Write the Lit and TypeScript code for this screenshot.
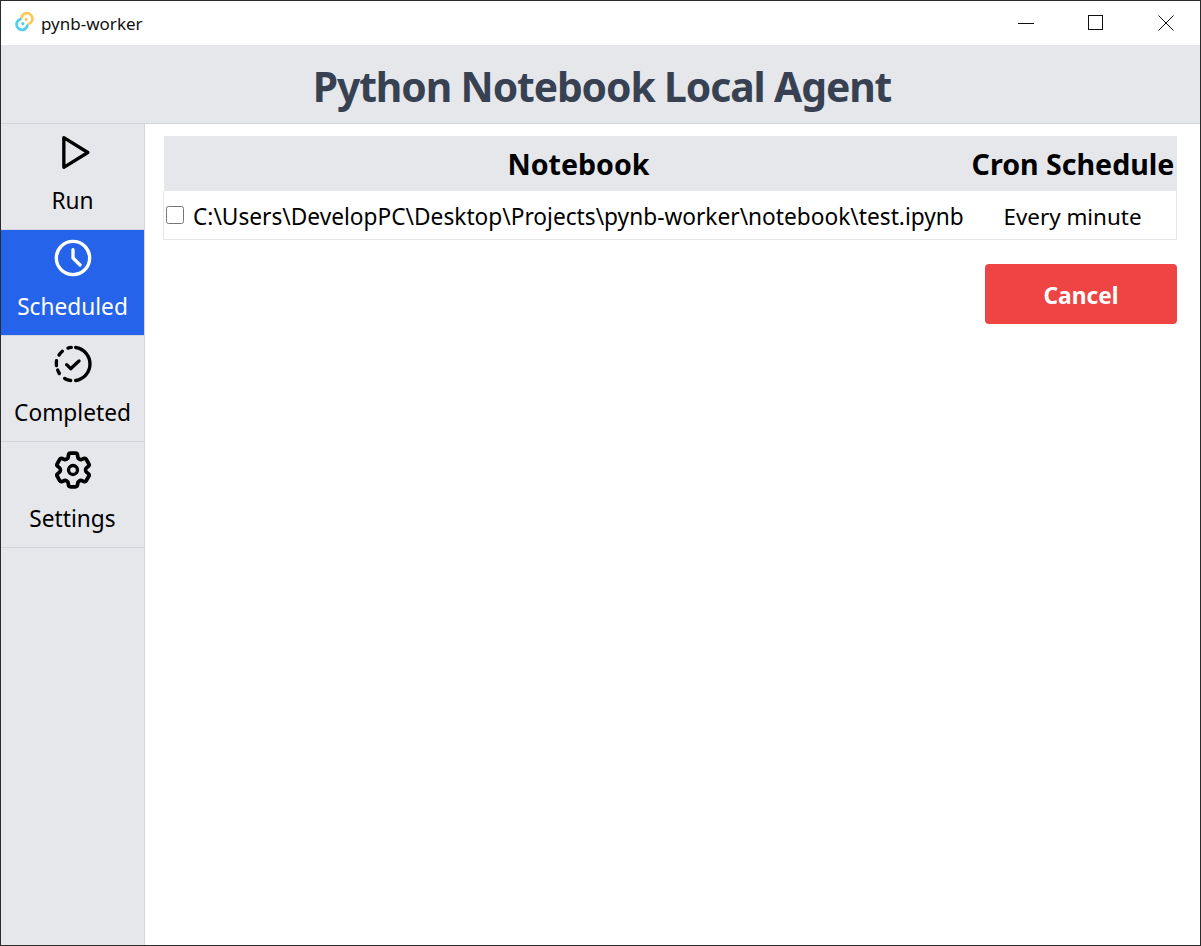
import {LitElement, css, html} from 'lit';
import {customElement} from 'lit/decorators.js';

@customElement('app-root')
export class AppRoot extends LitElement {
  static styles = css`
    :host {
      display: flex;
      flex-direction: column;
      width: 1201px;
      height: 946px;
      box-sizing: border-box;
      border: 1px solid #2b2b2b;
      font-family: 'Noto Sans', 'Open Sans', sans-serif;
      background: #fff;
      overflow: hidden;
      color: #000;
    }
    .titlebar {
      height: 44px;
      display: flex;
      align-items: center;
      flex: none;
      background: #fff;
    }
    .app-icon { margin: 0 0 3px 13px; width: 21px; height: 21px; }
    .app-name { margin-left: 6px; font-size: 17px; color: #111; }
    .win-btns { margin-left: auto; margin-right: -1px; display: flex; }
    .win-btn { width: 70px; height: 44px; display: flex; align-items: center; justify-content: center; }
    .header {
      height: 79px;
      flex: none;
      box-sizing: border-box;
      background: #e5e7eb;
      border-bottom: 1px solid #d1d5db;
      display: flex;
      align-items: center;
      justify-content: center;
      padding: 4px 0 0 3px;
      font-size: 40.8px;
      font-weight: 700;
      letter-spacing: -1.1px;
      color: #374151;
    }
    .body { flex: 1; display: flex; min-height: 0; }
    .side {
      width: 143px;
      flex: none;
      background: #e5e7eb;
      border-right: 1px solid #d1d5db;
    }
    .tab {
      height: 106px;
      box-sizing: border-box;
      border-bottom: 1px solid #d1d5db;
      display: flex;
      flex-direction: column;
      align-items: center;
      font-size: 22.7px;
    }
    .tab svg { margin-top: 8px; margin-bottom: 13px; }
    .tab.on { background: #2563eb; color: #fff; }
    .main { flex: 1; padding: 12px 23px 0 19px; }
    .cols { display: grid; grid-template-columns: 27px 775px 1fr; }
    .head { height: 55px; background: #e5e7eb; align-items: center; }
    .th {
      text-align: center;
      font-size: 28.6px;
      font-weight: 700;
      white-space: nowrap;
    }
    .row {
      height: 49px;
      margin-left: -1px;
      padding-top: 2px;
      box-sizing: border-box;
      border: 1px solid #e5e7eb;
      border-top: 0;
      align-items: center;
      font-size: 22.7px;
      white-space: nowrap;
    }
    .check { display: flex; }
    .check input { width: 18px; height: 18px; margin: 0 0 2px 2px; }
    .path { padding-left: 2px; }
    .cron { text-align: center; padding-left: 3px; }
    .minute { font-size: 22.4px; }
    .actions { display: flex; justify-content: flex-end; margin-top: 24px; }
    .cancel {
      width: 192px;
      height: 60px;
      padding: 2px 0 0;
      border: 0;
      border-radius: 4px;
      background: #ef4444;
      color: #fff;
      font: 700 22.7px 'Noto Sans', 'Open Sans', sans-serif;
    }
  `;

  render() {
    return html`
      <div class="titlebar">
        <svg class="app-icon" viewBox="0 0 20 20" fill="none" stroke-linecap="round" stroke-width="2.6">
          <path d="M7.3 6A5.2 5.2 0 1 1 14 12.2" stroke="#fbc95a"/>
          <path d="M12.7 14A5.2 5.2 0 1 1 6 7.8" stroke="#4fcfe8"/>
          <circle cx="11.6" cy="8" r="1.5" fill="#fbc95a"/>
          <circle cx="8.4" cy="12" r="1.5" fill="#4fcfe8"/>
        </svg>
        <span class="app-name">pynb-worker</span>
        <div class="win-btns">
          <div class="win-btn"><svg width="16" height="16" viewBox="0 0 16 16"><path d="M0 8.5h16" stroke="#111"/></svg></div>
          <div class="win-btn"><svg width="16" height="16" viewBox="0 0 16 16"><rect x=".5" y=".5" width="14" height="14" fill="none" stroke="#111"/></svg></div>
          <div class="win-btn"><svg width="16" height="16" viewBox="0 0 16 16"><path d="M.5 .5l15 15M15.5 .5l-15 15" stroke="#111"/></svg></div>
        </div>
      </div>
      <div class="header">Python Notebook Local Agent</div>
      <div class="body">
        <nav class="side">
          <div class="tab">
            <svg width="40" height="40" viewBox="0 0 24 24" fill="none" stroke="currentColor" stroke-width="2" stroke-linejoin="round"><path d="M6.5 3.4v17.8l14.4-8.9z"/></svg>
            Run
          </div>
          <div class="tab on">
            <svg width="40" height="40" viewBox="0 0 24 24" fill="none" stroke="currentColor" stroke-width="2" stroke-linecap="round" stroke-linejoin="round"><circle cx="12" cy="12" r="10"/><path d="M12 7v5l4.2 4.2"/></svg>
            Scheduled
          </div>
          <div class="tab">
            <svg width="40" height="40" viewBox="0 0 24 24" fill="none" stroke="currentColor" stroke-width="2" stroke-linecap="round" stroke-linejoin="round"><path d="M13.6 2.1A10 10 0 0 1 13.6 21.9"/><path d="M10.6 21.9A10 10 0 0 1 7 20.66"/><path d="M3.8 17.7A10 10 0 0 1 2.8 15.6"/><path d="M2.1 13A10 10 0 0 1 2.1 10"/><path d="M3.6 6.6A10 10 0 0 1 5.6 4.3"/><path d="M9 2.46A10 10 0 0 1 11 2.05"/><path d="M8.2 12.4l2.4 2.4 5-4.6"/></svg>
            Completed
          </div>
          <div class="tab">
            <svg width="40" height="40" viewBox="0 0 24 24" fill="none" stroke="currentColor" stroke-width="2" stroke-linecap="round" stroke-linejoin="round"><path transform="translate(12 12) scale(1.12) translate(-12 -12)" stroke-width="2" d="M9.594 3.94c.09-.542.56-.94 1.11-.94h2.593c.55 0 1.02.398 1.11.94l.213 1.281c.063.374.313.686.645.87.074.04.147.083.22.127.325.196.72.257 1.075.124l1.217-.456a1.125 1.125 0 0 1 1.37.49l1.296 2.247a1.125 1.125 0 0 1-.26 1.431l-1.003.827c-.293.241-.438.613-.43.992a7.723 7.723 0 0 1 0 .255c-.008.378.137.75.43.991l1.004.827c.424.35.534.955.26 1.43l-1.298 2.247a1.125 1.125 0 0 1-1.369.491l-1.217-.456c-.355-.133-.75-.072-1.076.124a6.47 6.47 0 0 1-.22.128c-.331.183-.581.495-.644.869l-.213 1.281c-.09.543-.56.94-1.11.94h-2.594c-.55 0-1.019-.398-1.11-.94l-.213-1.281c-.062-.374-.312-.686-.644-.87a6.52 6.52 0 0 1-.22-.127c-.325-.196-.72-.257-1.076-.124l-1.217.456a1.125 1.125 0 0 1-1.369-.49l-1.297-2.247a1.125 1.125 0 0 1 .26-1.431l1.004-.827c.292-.24.437-.613.43-.991a6.932 6.932 0 0 1 0-.255c.007-.38-.138-.751-.43-.992l-1.004-.827a1.125 1.125 0 0 1-.26-1.43l1.297-2.247a1.125 1.125 0 0 1 1.37-.491l1.216.456c.356.133.751.072 1.076-.124.072-.044.146-.086.22-.128.332-.183.582-.495.644-.869l.214-1.28Z"/><circle cx="12" cy="12" r="2.7"/></svg>
            Settings
          </div>
        </nav>
        <main class="main">
          <div class="cols head">
            <div></div>
            <div class="th">Notebook</div>
            <div class="th cron">Cron Schedule</div>
          </div>
          <div class="cols row">
            <div class="check"><input type="checkbox"/></div>
            <div class="path">C:\\Users\\DevelopPC\\Desktop\\Projects\\pynb-worker\\notebook\\test.ipynb</div>
            <div class="cron minute">Every minute</div>
          </div>
          <div class="actions"><button class="cancel">Cancel</button></div>
        </main>
      </div>
    `;
  }
}
